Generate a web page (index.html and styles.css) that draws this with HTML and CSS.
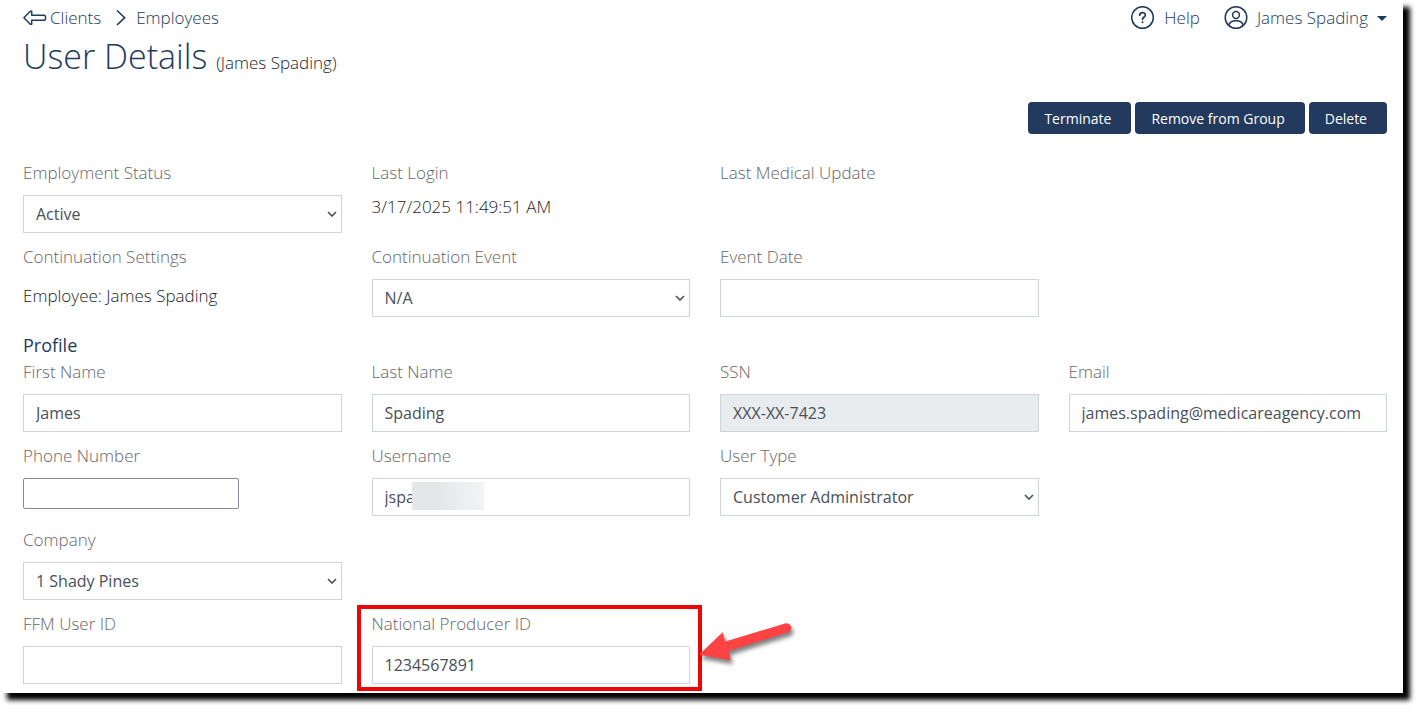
FILE: index.html
```html
<!DOCTYPE html>
<html lang="en">
  <head>
    <meta charset="UTF-8" />
    <meta name="viewport" content="width=device-width, initial-scale=1.0" />
    <title>User Details</title>
    <link rel="stylesheet" href="styles.css">
  </head>
  <body>
    <div class="page">
      <header class="topbar">
        <nav class="breadcrumb" aria-label="Breadcrumb">
          <a href="#clients" class="back-link">
            <svg width="24" height="18" viewBox="0 0 24 18" fill="none" stroke="currentColor" stroke-width="1.5" stroke-linejoin="round">
              <path d="M0.900 8.700 L7.300 2.200 H8.700 V6.300 H21.500 L22.500 7.300 V10.300 L21.500 11.300 H8.700 V15.200 H7.300 Z" />
            </svg>
            <span>Clients</span>
          </a>
          <svg class="separator" width="10" height="18" viewBox="0 0 10 18" fill="none" stroke="currentColor" stroke-width="1.6">
            <path d="M1 1.500 L8.700 8.700 L1 16" />
          </svg>
          <a href="#employees">Employees</a>
        </nav>
        <div class="account">
          <a href="#help" class="account-link">
            <svg width="24" height="24" viewBox="0 0 24 24" fill="none" stroke="currentColor" stroke-width="1.5" stroke-linecap="round">
              <circle cx="11.500" cy="11.500" r="10.800" />
              <path d="M8.700 9.200 C8.700 5.700 14.300 5.700 14.300 9 C14.300 11.200 11.500 11.200 11.500 13.300" stroke-width="1.700" />
              <circle cx="11.500" cy="16.200" r="1" fill="currentColor" stroke="none" />
            </svg>
            <span>Help</span>
          </a>
          <a href="#account" class="account-link user-link">
            <svg width="24" height="24" viewBox="0 0 24 24" fill="none" stroke="currentColor" stroke-width="1.5">
              <circle cx="12" cy="11.500" r="10.800" />
              <circle cx="12" cy="9" r="3.400" />
              <path d="M4.800 19.300 C6.200 13.300 17.800 13.300 19.200 19.300" />
            </svg>
            <span>James Spading</span>
            <span class="caret"></span>
          </a>
        </div>
      </header>

      <h1>User Details <small>(James Spading)</small></h1>

      <div class="actions">
        <button type="button">Terminate</button>
        <button type="button">Remove from Group</button>
        <button type="button">Delete</button>
      </div>

      <form>
        <!-- Status -->
        <div class="row">
          <div class="field">
            <label for="status">Employment Status</label>
            <select id="status" class="control">
              <option>Active</option>
            </select>
          </div>
          <div class="field">
            <span class="label">Last Login</span>
            <p class="value">3/17/2025 11:49:51 AM</p>
          </div>
          <div class="field">
            <span class="label">Last Medical Update</span>
          </div>
        </div>
        <div class="row">
          <div class="field">
            <span class="label">Continuation Settings</span>
            <p class="value value-padded">Employee: James Spading</p>
          </div>
          <div class="field">
            <label for="event">Continuation Event</label>
            <select id="event" class="control">
              <option>N/A</option>
            </select>
          </div>
          <div class="field">
            <label for="eventDate">Event Date</label>
            <input type="text" id="eventDate" class="control" />
          </div>
        </div>

        <!-- Profile -->
        <h2>Profile</h2>
        <div class="row">
          <div class="field">
            <label for="firstName">First Name</label>
            <input type="text" id="firstName" class="control" value="James" />
          </div>
          <div class="field">
            <label for="lastName">Last Name</label>
            <input type="text" id="lastName" class="control" value="Spading" />
          </div>
          <div class="field">
            <label for="ssn">SSN</label>
            <input type="text" id="ssn" class="control" value="XXX-XX-7423" readonly />
          </div>
          <div class="field">
            <label for="email">Email</label>
            <input type="email" id="email" class="control" value="james.spading@medicareagency.com" />
          </div>
        </div>
        <div class="row">
          <div class="field">
            <label for="phone">Phone Number</label>
            <input type="tel" id="phone" class="phone" />
          </div>
          <div class="field">
            <label for="username">Username</label>
            <input type="text" id="username" class="control" value="jspa" />
            <span class="redacted"></span>
          </div>
          <div class="field">
            <label for="userType">User Type</label>
            <select id="userType" class="control">
              <option>Customer Administrator</option>
            </select>
          </div>
        </div>
        <div class="row">
          <div class="field">
            <label for="company">Company</label>
            <select id="company" class="control">
              <option>1 Shady Pines</option>
            </select>
          </div>
        </div>
        <div class="row">
          <div class="field">
            <label for="ffmId">FFM User ID</label>
            <input type="text" id="ffmId" class="control" />
          </div>
          <div class="field">
            <label for="producerId">National Producer ID</label>
            <input type="text" id="producerId" class="control" value="1234567891" />
            <span class="highlight"></span>
            <svg class="arrow" width="96" height="44" viewBox="0 0 96 44" fill="#ff4343">
              <path d="M0 33.700 L23.700 11.300 L26.300 20.500 L86 2.500 C93 1 94.500 9.500 88.800 11.300 L29.500 30 L31.700 39.300 Z" />
            </svg>
          </div>
        </div>
      </form>
    </div>
  </body>
</html>
```
FILE: styles.css
```css
/* Reset & Global Styling */
* {
  box-sizing: border-box;
  margin: 0;
  padding: 0;
}

body {
  padding: 0 17px 20px 0;
  background: #fff;
  color: #212529;
  font-family: "Open Sans", sans-serif;
  font-size: 17px;
  font-weight: 300;
  line-height: 24px;
}

a {
  color: #223a5e;
  text-decoration: none;
}

.page {
  padding: 5px 16px 9px 23px;
  background: #fff;
  box-shadow: 7px 7px 5px #000;
}

/* Top bar */
.topbar {
  display: flex;
  justify-content: space-between;
  align-items: center;
  height: 26px;
}

.breadcrumb,
.back-link,
.account,
.account-link {
  display: flex;
  align-items: center;
}

.back-link {
  gap: 3px;
}

.separator {
  margin: 0 10px 0 15px;
  color: #223a5e;
}

.account {
  gap: 24px;
}

.account-link {
  gap: 9px;
}

.caret {
  border: 5px solid transparent;
  border-top-color: #223a5e;
  border-bottom: 0;
}

/* Headings */
h1 {
  color: #223a5e;
  font-size: 34px;
  font-weight: 300;
  line-height: 50px;
}

h1 small {
  color: #212529;
  font-size: 17px;
}

h2 {
  margin: 15px 0 2px;
  color: #223a5e;
  font-size: 18px;
  font-weight: 400;
  line-height: 26px;
}

/* Buttons */
.actions {
  display: flex;
  justify-content: flex-end;
  gap: 4px;
  margin: 14px 0 27px;
}

button {
  height: 32px;
  padding: 0 20px 0 16px;
  border: none;
  border-radius: 4px;
  background: #223a5e;
  color: #fff;
  font-family: "Open Sans", sans-serif;
  font-size: 14px;
  cursor: pointer;
}

/* Form */
.row {
  display: grid;
  grid-template-columns: repeat(4, 1fr);
  gap: 30px;
  margin-bottom: 12px;
}

.row:last-child {
  margin-bottom: 0;
}

.field {
  position: relative;
  min-width: 0;
}

label,
.label {
  display: block;
  margin-bottom: 10px;
  color: #666;
}

.value-padded {
  padding-top: 5px;
}

.control {
  display: block;
  width: 100%;
  height: 38px;
  padding: 6px 12px;
  border: 1px solid #ced4da;
  background: #fff;
  color: #495057;
  font-family: "Open Sans", sans-serif;
  font-size: 16px;
  font-weight: 400;
}

select.control {
  appearance: none;
  padding-right: 24px;
  background: #fff url("data:image/svg+xml,%3Csvg xmlns='http://www.w3.org/2000/svg' width='10' height='6' fill='none' stroke='%23495057' stroke-width='1.6'%3E%3Cpath d='M1 1l4 4 4-4'/%3E%3C/svg%3E") no-repeat right 4px center;
}

.control[readonly] {
  background: #e9ecef;
}

.phone {
  display: block;
  width: 216px;
  max-width: 100%;
  height: 31px;
  border: 1px solid #8a889c;
  border-radius: 2px;
}

.redacted {
  position: absolute;
  left: 40px;
  bottom: 6px;
  width: 72px;
  height: 28px;
  background: linear-gradient(80deg, #e5e6e8 40%, #f4f5f5);
}

/* Callout around the producer ID */
.highlight {
  position: absolute;
  inset: -7px -12px;
  left: -15px;
  border: 4px solid #ec0606;
  pointer-events: none;
}

.arrow {
  position: absolute;
  top: 9px;
  left: calc(100% + 9px);
  overflow: visible;
  filter: drop-shadow(2px 4px 2px rgba(0, 0, 0, 0.5));
}
```
